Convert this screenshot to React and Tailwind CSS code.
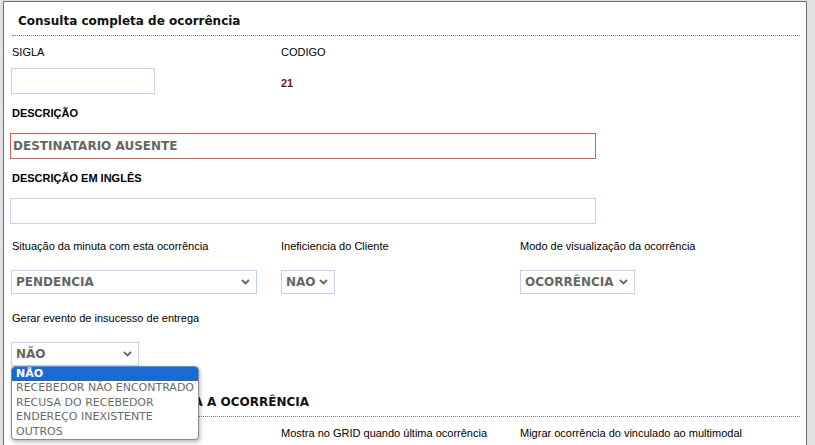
import React from 'react';

const label = "font-['Liberation_Sans',Arial,sans-serif] text-[11px] text-black";
const selFont = "font-['DejaVu_Sans',Verdana,sans-serif] font-bold text-[12px] text-[#666]";

const Chevron = () => (
  <svg width="9" height="6" viewBox="0 0 9 6" className="shrink-0">
    <path d="M1 1l3.5 3.5L8 1" fill="none" stroke="#666" strokeWidth="1.8" />
  </svg>
);

const FakeSelect = ({ value, width }) => (
  <div
    className={`h-[24px] border border-[#c3d0ef] bg-white flex items-center justify-between pl-[4px] pr-[6px] ${selFont}`}
    style={{ width }}
  >
    <span>{value}</span>
    <Chevron />
  </div>
);

const options = [
  'NÃO',
  'RECEBEDOR NÃO ENCONTRADO',
  'RECUSA DO RECEBEDOR',
  'ENDEREÇO INEXISTENTE',
  'OUTROS',
];

const App = () => {
  return (
    <div className="w-[815px] h-[445px] bg-[#e1e1e1] overflow-hidden pt-[1px] pl-[3px]">
      <div className="w-[804px] h-[460px] bg-white border-l border-t border-r border-[#6f6f6f]">
        {/* title */}
        <div className="h-[33px] pl-[14px] pt-[11px] font-['DejaVu_Sans',Verdana,sans-serif] font-bold text-[12px] leading-[16px] text-[#111]">
          Consulta completa de ocorrência
        </div>
        <div className="ml-[8px] mr-[6px] border-b border-dotted border-[#777]" />

        <div className="pl-[8px] grid grid-cols-[269px_239px_1fr]">
          {/* sigla / codigo */}
          <div className={`h-[32px] flex items-center ${label}`}>SIGLA</div>
          <div className={`h-[32px] flex items-center ${label}`}>CODIGO</div>
          <div />
          <div className="h-[26px]">
            <div className="ml-[-1px] w-[144px] h-[26px] border border-[#c3d0ef]" />
          </div>
          <div className="h-[26px] pt-[9px] font-['Liberation_Sans',Arial,sans-serif] text-[11px] leading-[12px] font-bold text-[#7a1010]">21</div>
          <div />
        </div>

        <div className="pl-[8px]">
          <div className={`h-[39px] flex items-center font-bold ${label}`}>DESCRIÇÃO</div>
          <div className="ml-[-2px] w-[586px] h-[26px] border border-[#e05a5a] flex items-center pl-[2px] font-['DejaVu_Sans',Verdana,sans-serif] font-bold text-[12px] text-[#666]">
            DESTINATARIO AUSENTE
          </div>
          <div className={`h-[39px] flex items-center font-bold ${label}`}>DESCRIÇÃO EM INGLÊS</div>
          <div className="ml-[-2px] w-[586px] h-[26px] border border-[#c3d0ef]" />
        </div>

        <div className="pl-[8px] grid grid-cols-[269px_239px_1fr]">
          <div className={`h-[46px] flex items-center pb-[2px] ${label}`}>Situação da minuta com esta ocorrência</div>
          <div className={`h-[46px] flex items-center pb-[2px] ${label}`}>Ineficiencia do Cliente</div>
          <div className={`h-[46px] flex items-center pb-[2px] ${label}`}>Modo de visualização da ocorrência</div>
          <div className="ml-[-1px]"><FakeSelect value="PENDENCIA" width={246} /></div>
          <div><FakeSelect value="NAO" width={54} /></div>
          <div><FakeSelect value="OCORRÊNCIA" width={115} /></div>
        </div>

        <div className="pl-[8px]">
          <div className={`h-[48px] flex items-center ${label}`}>Gerar evento de insucesso de entrega</div>
          <div className="relative ml-[-1px] w-[128px]">
            <FakeSelect value="NÃO" width={128} />
            <div className="absolute left-0 top-full z-10 w-[188px] border border-[#8a8a8a] rounded-[4px] bg-white shadow-[1px_2px_4px_rgba(0,0,0,0.3)] overflow-hidden font-['DejaVu_Sans',Verdana,sans-serif] text-[11px] leading-[14.4px]">
              {options.map((o, i) => (
                <div
                  key={o}
                  className={i === 0 ? 'bg-[#1a6ad4] text-white font-bold pl-[4px]' : 'text-[#6b6b6b] pl-[4px]'}
                >
                  {o}
                </div>
              ))}
            </div>
          </div>
        </div>

        {/* second section */}
        <div className="h-[44px] pt-[28px] pl-[14px] font-['DejaVu_Sans',Verdana,sans-serif] font-bold text-[12px] leading-[16px] text-[#111]">
          OPÇÕES DE EXIBIÇÃO PARA A OCORRÊNCIA
        </div>
        <div className="mt-[6px] ml-[8px] mr-[6px] border-b border-dotted border-[#777]" />

        <div className="pl-[8px] grid grid-cols-[269px_239px_1fr]">
          <div className={`h-[32px] flex items-center ${label}`}>Exibir no rastreamento</div>
          <div className={`h-[32px] flex items-center ${label}`}>Mostra no GRID quando última ocorrência</div>
          <div className={`h-[32px] flex items-center ${label}`}>Migrar ocorrência do vinculado ao multimodal</div>
        </div>
      </div>
    </div>
  );
};

export default App;
